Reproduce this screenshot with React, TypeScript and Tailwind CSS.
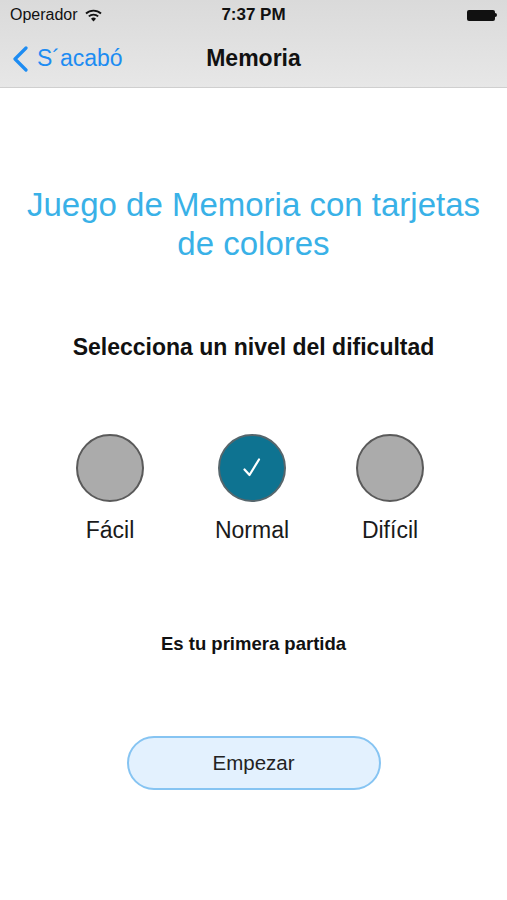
import React from "react";

const font = { fontFamily: '"Liberation Sans", Arial, sans-serif' };

const Level = ({ label, selected, className }: { label: string; selected?: boolean; className?: string }) => (
  <div className={"flex w-[68px] flex-col items-center " + (className ?? "")}>
    <div
      className={
        selected
          ? "flex h-[68px] w-[68px] items-center justify-center rounded-full border-2 border-[#56666c] bg-[#0e7391]"
          : "h-[68px] w-[68px] rounded-full border-2 border-[#5a5a5a] bg-[#ababab]"
      }
    >
      {selected && (
        <svg width="22" height="22" viewBox="0 0 22 22">
          <path d="M3.5 12.5 L8.5 18 L18 2.5" fill="none" stroke="white" strokeWidth="2.2" strokeLinecap="round" strokeLinejoin="round" />
        </svg>
      )}
    </div>
    <div className="mt-[14px] whitespace-nowrap text-[23px] leading-[28px] text-[#1a1a1a]">{label}</div>
  </div>
);

export default function App() {
  return (
    <div className="flex h-[900px] w-[507px] flex-col bg-white" style={font}>
      {/* Status + nav bar */}
      <div className="border-b border-[#cfcfcf] bg-gradient-to-b from-[#dadada] to-[#e7e7e7]">
        <div className="flex h-[30px] items-center px-[10px] text-[16px] text-[#111]">
          <div className="flex w-[160px] items-center gap-[7px]">
            <span>Operador</span>
            <svg width="17" height="13" viewBox="0 0 17 13">
              <path d="M1 4.5 A11 11 0 0 1 16 4.5" fill="none" stroke="#111" strokeWidth="1.8" />
              <path d="M3.8 7.4 A7 7 0 0 1 13.2 7.4" fill="none" stroke="#111" strokeWidth="1.8" />
              <path d="M8.5 12.5 L6 9.8 A3.5 3.5 0 0 1 11 9.8 Z" fill="#111" />
            </svg>
          </div>
          <div className="flex-1 text-center text-[17px] font-bold">7:37 PM</div>
          <div className="flex w-[160px] justify-end">
            <div className="flex items-center">
              <div className="h-[11px] w-[28px] rounded-[2px] bg-[#111]" />
              <div className="h-[4px] w-[2px] rounded-r-sm bg-[#111]" />
            </div>
          </div>
        </div>
        <div className="flex h-[57px] items-center px-[12px]">
          <div className="flex w-[160px] items-center gap-[7px] text-[23px] text-[#1d8cf2]">
            <svg width="18" height="26" viewBox="0 0 18 26">
              <path d="M14 2 L3 13 L14 24" fill="none" stroke="#1d8cf2" strokeWidth="3.2" strokeLinecap="round" strokeLinejoin="round" />
            </svg>
            <span>S´acabó</span>
          </div>
          <div className="flex-1 text-center text-[23px] font-bold text-[#111]">Memoria</div>
          <div className="w-[160px]" />
        </div>
      </div>

      {/* Content */}
      <div className="flex flex-col items-center">
        <h1 className="mt-[97px] px-[10px] text-center text-[33px] leading-[39px] text-[#39b1e7]">
          Juego de Memoria con tarjetas de colores
        </h1>
        <p className="mt-[70px] text-[23px] font-bold leading-[28px] text-[#111]">
          Selecciona un nivel del dificultad
        </p>
        <div className="mt-[73px] flex self-start pl-[76px]">
          <Level label="Fácil" />
          <Level label="Normal" selected className="ml-[74px]" />
          <Level label="Difícil" className="ml-[70px]" />
        </div>
        <p className="mt-[89px] text-[18.5px] font-bold leading-[22px] text-[#111]">Es tu primera partida</p>
        <button className="mt-[81px] h-[54px] w-[254px] rounded-full border-2 border-[#86c4f2] bg-[#e3f1fe] text-[20.5px] text-[#222]">
          Empezar
        </button>
      </div>
    </div>
  );
}
